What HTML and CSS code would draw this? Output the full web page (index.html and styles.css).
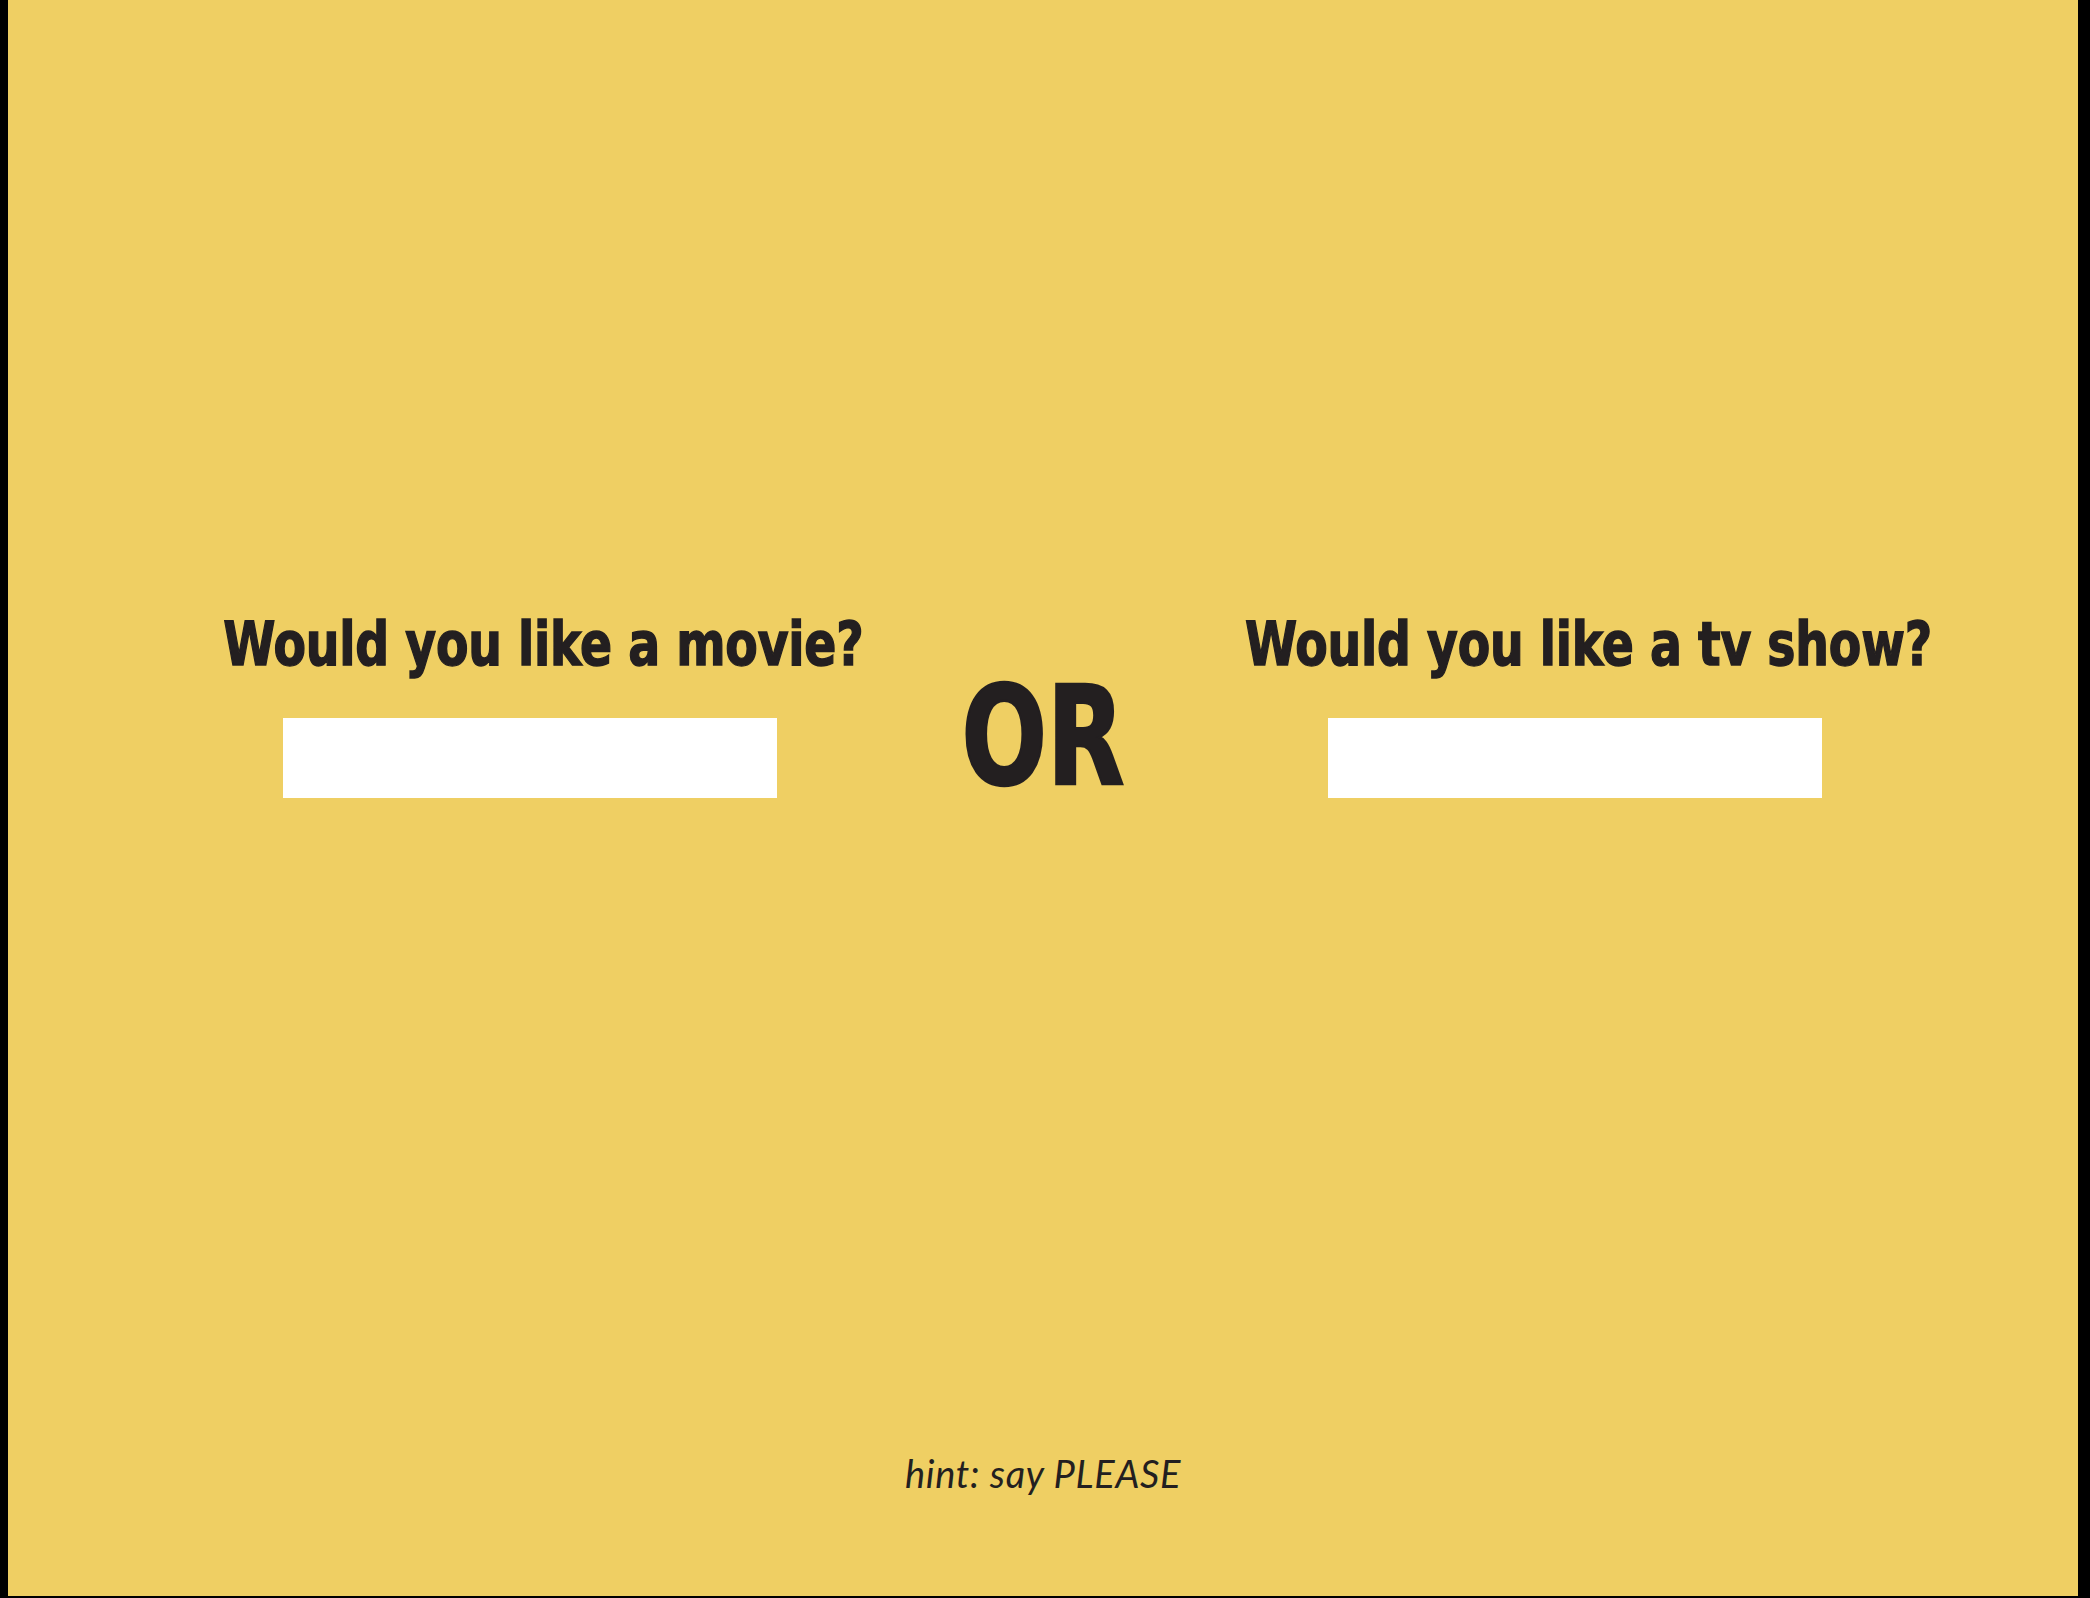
FILE: index.html
```html
<!DOCTYPE html>
<html lang="en">
<head>
<meta charset="utf-8">
<title>Movie or TV show</title>
<link rel="stylesheet" href="styles.css">
</head>
<body>
<main class="page">
  <section class="choices">
    <div class="choice choice-movie">
      <h2 class="question">Would you like a movie?</h2>
      <input class="answer" type="text" aria-label="movie">
    </div>
    <div class="or">OR</div>
    <div class="choice choice-tv">
      <h2 class="question">Would you like a tv show?</h2>
      <input class="answer" type="text" aria-label="tv show">
    </div>
  </section>
  <p class="hint">hint: say PLEASE</p>
</main>
</body>
</html>
```

FILE: styles.css
```css
html {
  background: #000;
  height: 100%;
}
body {
  margin: 0 12px 2px 8px;
  height: 1596px;
}
.page {
  height: 1596px;
  background: #efcf63;
  color: #231f20;
  display: flex;
  flex-direction: column;
  overflow: hidden;
}
.choices {
  display: grid;
  grid-template-columns: 700px 300px 790px;
  align-items: start;
  padding-top: 613px;
  padding-left: 185px;
}
.choice {
  display: flex;
  flex-direction: column;
  align-items: center;
}
.question {
  margin: 0;
  font-family: "DejaVu Sans Condensed", "DejaVu Sans", sans-serif;
  font-weight: 700;
  font-size: 61px;
  line-height: 1;
  white-space: nowrap;
  letter-spacing: -0.2px;
  -webkit-text-stroke: 1.4px currentColor;
  transform: scaleX(0.862);
}
.answer {
  margin: 44px 26px 0 0;
  width: 494px;
  height: 80px;
  box-sizing: border-box;
  border: 0;
  padding: 0;
  background: #fff;
  outline: none;
}
.or {
  margin-top: 55px;
  text-align: center;
  font-family: "DejaVu Sans Condensed", "DejaVu Sans", sans-serif;
  font-weight: 700;
  font-size: 138px;
  line-height: 1;
  -webkit-text-stroke: 2.5px currentColor;
  transform: scaleX(0.81);
}
.hint {
  margin: auto 0 0;
  padding: 0 0 104px;
  text-align: center;
  font-family: Lato, "Liberation Sans", sans-serif;
  font-style: italic;
  font-weight: 400;
  font-size: 38px;
  letter-spacing: 0.7px;
  line-height: 1;
}
```
